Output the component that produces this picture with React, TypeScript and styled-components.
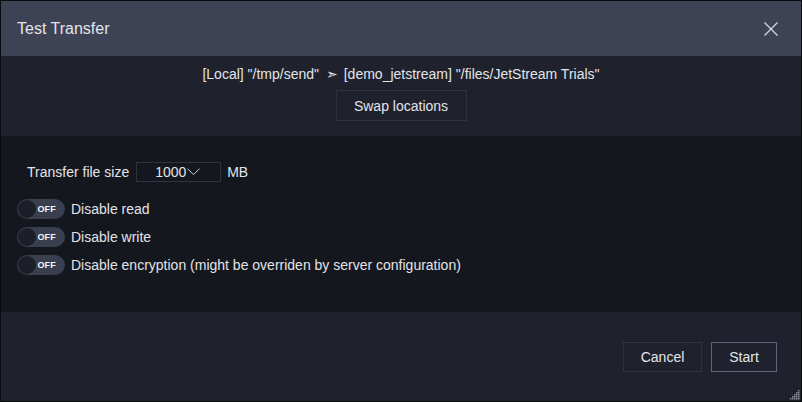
import React from "react";
import styled, { createGlobalStyle } from "styled-components";

const Global = createGlobalStyle`
  html, body { margin: 0; padding: 0; background: #0b0c10; }
  body { font-family: "Liberation Sans", Arial, Helvetica, sans-serif; }
  * { box-sizing: border-box; }
`;

const Dialog = styled.div`
  width: 802px;
  height: 402px;
  border: 1px solid #0a0b0e;
  display: flex;
  flex-direction: column;
  background: #15171e;
  color: #e2e4ea;
  position: relative;
`;

const Header = styled.div`
  height: 55px;
  flex: none;
  background: #3d4254;
  display: flex;
  align-items: center;
  justify-content: space-between;
  padding: 0 23px 0 16px;
`;

const Title = styled.h1`
  margin: 0;
  font-size: 16px;
  font-weight: 400;
  color: #e3e5ec;
`;

const CloseButton = styled.button`
  background: none;
  border: none;
  padding: 0;
  width: 14px;
  height: 14px;
  display: flex;
  cursor: pointer;
`;

const RouteSection = styled.div`
  height: 80px;
  flex: none;
  background: #1f222c;
  display: flex;
  flex-direction: column;
  align-items: center;
  padding-top: 9px;
  gap: 7px;
`;

const RouteText = styled.div`
  height: 18px;
  font-size: 14px;
  line-height: 18px;
  color: #e2e4ea;
  white-space: pre;
  display: flex;
  align-items: center;
`;

const Arrow = styled.span`
  font-family: "DejaVu Sans", sans-serif;
  font-size: 14px;
  line-height: 18px;
  margin: 0 6px 0 7px;
`;

const Button = styled.button<{ $primary?: boolean }>`
  font-family: "Liberation Sans", Arial, sans-serif;
  font-size: 14px;
  color: #e2e4ea;
  background: transparent;
  border: 1px solid ${(p) => (p.$primary ? "#5b6479" : "#30333e")};
  height: 30px;
  padding: 0;
  cursor: pointer;
`;

const SwapButton = styled(Button)`
  width: 131px;
  height: 31px;
  flex: none;
`;

const Body = styled.div`
  height: 176px;
  flex: none;
  background: #15171e;
  padding: 26px 0 0 16px;
  display: flex;
  flex-direction: column;
  gap: 8px;
`;

const SizeRow = styled.div`
  display: flex;
  align-items: center;
  height: 20px;
  padding-left: 10px;
  font-size: 14px;
  margin-bottom: 9px;
`;

const SizeSelect = styled.div`
  width: 85px;
  height: 20px;
  border: 1px solid #30333e;
  margin: 0 6px 0 7px;
  display: flex;
  align-items: center;
  padding-left: 18px;
  font-size: 14px;
  color: #e2e4ea;
`;

const ToggleRow = styled.label`
  display: flex;
  align-items: center;
  height: 20px;
  gap: 6px;
  font-size: 14px;
  color: #e2e4ea;
`;

const Track = styled.span`
  width: 48px;
  height: 20px;
  border-radius: 10px;
  background: #3a3f50;
  position: relative;
  display: flex;
  align-items: center;
  justify-content: flex-end;
  padding-right: 9px;
  flex: none;
`;

const Knob = styled.span`
  position: absolute;
  left: 1px;
  top: 1px;
  width: 18px;
  height: 18px;
  border-radius: 50%;
  background: #1c1f28;
`;

const OffText = styled.span`
  font-size: 9px;
  font-weight: 700;
  color: #f2f3f6;
  letter-spacing: 0.2px;
`;

const Footer = styled.div`
  flex: 1;
  background: #1f222c;
  display: flex;
  justify-content: flex-end;
  align-items: flex-start;
  padding: 30px 24px 0 0;
  gap: 9px;
`;

const Grip = styled.svg`
  position: absolute;
  right: 1px;
  bottom: 1px;
`;

function Toggle({ label }: { label: string }) {
  return (
    <ToggleRow>
      <Track>
        <Knob />
        <OffText>OFF</OffText>
      </Track>
      {label}
    </ToggleRow>
  );
}

export default function App() {
  return (
    <>
      <Global />
      <Dialog>
        <Header>
          <Title>Test Transfer</Title>
          <CloseButton aria-label="Close">
            <svg width="14" height="14" viewBox="0 0 14 14">
              <path d="M0.5 0.5 L13.5 13.5 M13.5 0.5 L0.5 13.5" stroke="#d5d8e0" strokeWidth="1.3" fill="none" />
            </svg>
          </CloseButton>
        </Header>
        <RouteSection>
          <RouteText>
            [Local] "/tmp/send"<Arrow>➣</Arrow>[demo_jetstream] "/files/JetStream Trials"
          </RouteText>
          <SwapButton>Swap locations</SwapButton>
        </RouteSection>
        <Body>
          <SizeRow>
            Transfer file size
            <SizeSelect>
              1000
              <svg width="13" height="8" viewBox="0 0 13 8" style={{ marginLeft: 1 }}>
                <path d="M0.5 0.8 L6.5 6.5 L12.5 0.8" stroke="#c9ccd4" strokeWidth="1" fill="none" />
              </svg>
            </SizeSelect>
            MB
          </SizeRow>
          <Toggle label="Disable read" />
          <Toggle label="Disable write" />
          <Toggle label="Disable encryption (might be overriden by server configuration)" />
        </Body>
        <Footer>
          <Button style={{ width: 79 }}>Cancel</Button>
          <Button $primary style={{ width: 66 }}>Start</Button>
        </Footer>
        <Grip width="10" height="10" viewBox="0 0 10 10">
          {[
            [8, 0], [8, 2], [6, 2], [8, 4], [6, 4], [4, 4], [8, 6], [6, 6], [4, 6], [2, 6], [8, 8], [6, 8], [4, 8], [2, 8], [0, 8],
          ].map(([x, y], i) => (
            <rect key={i} x={x} y={y} width="1.5" height="1.5" fill="#8a8f9c" />
          ))}
        </Grip>
      </Dialog>
    </>
  );
}
